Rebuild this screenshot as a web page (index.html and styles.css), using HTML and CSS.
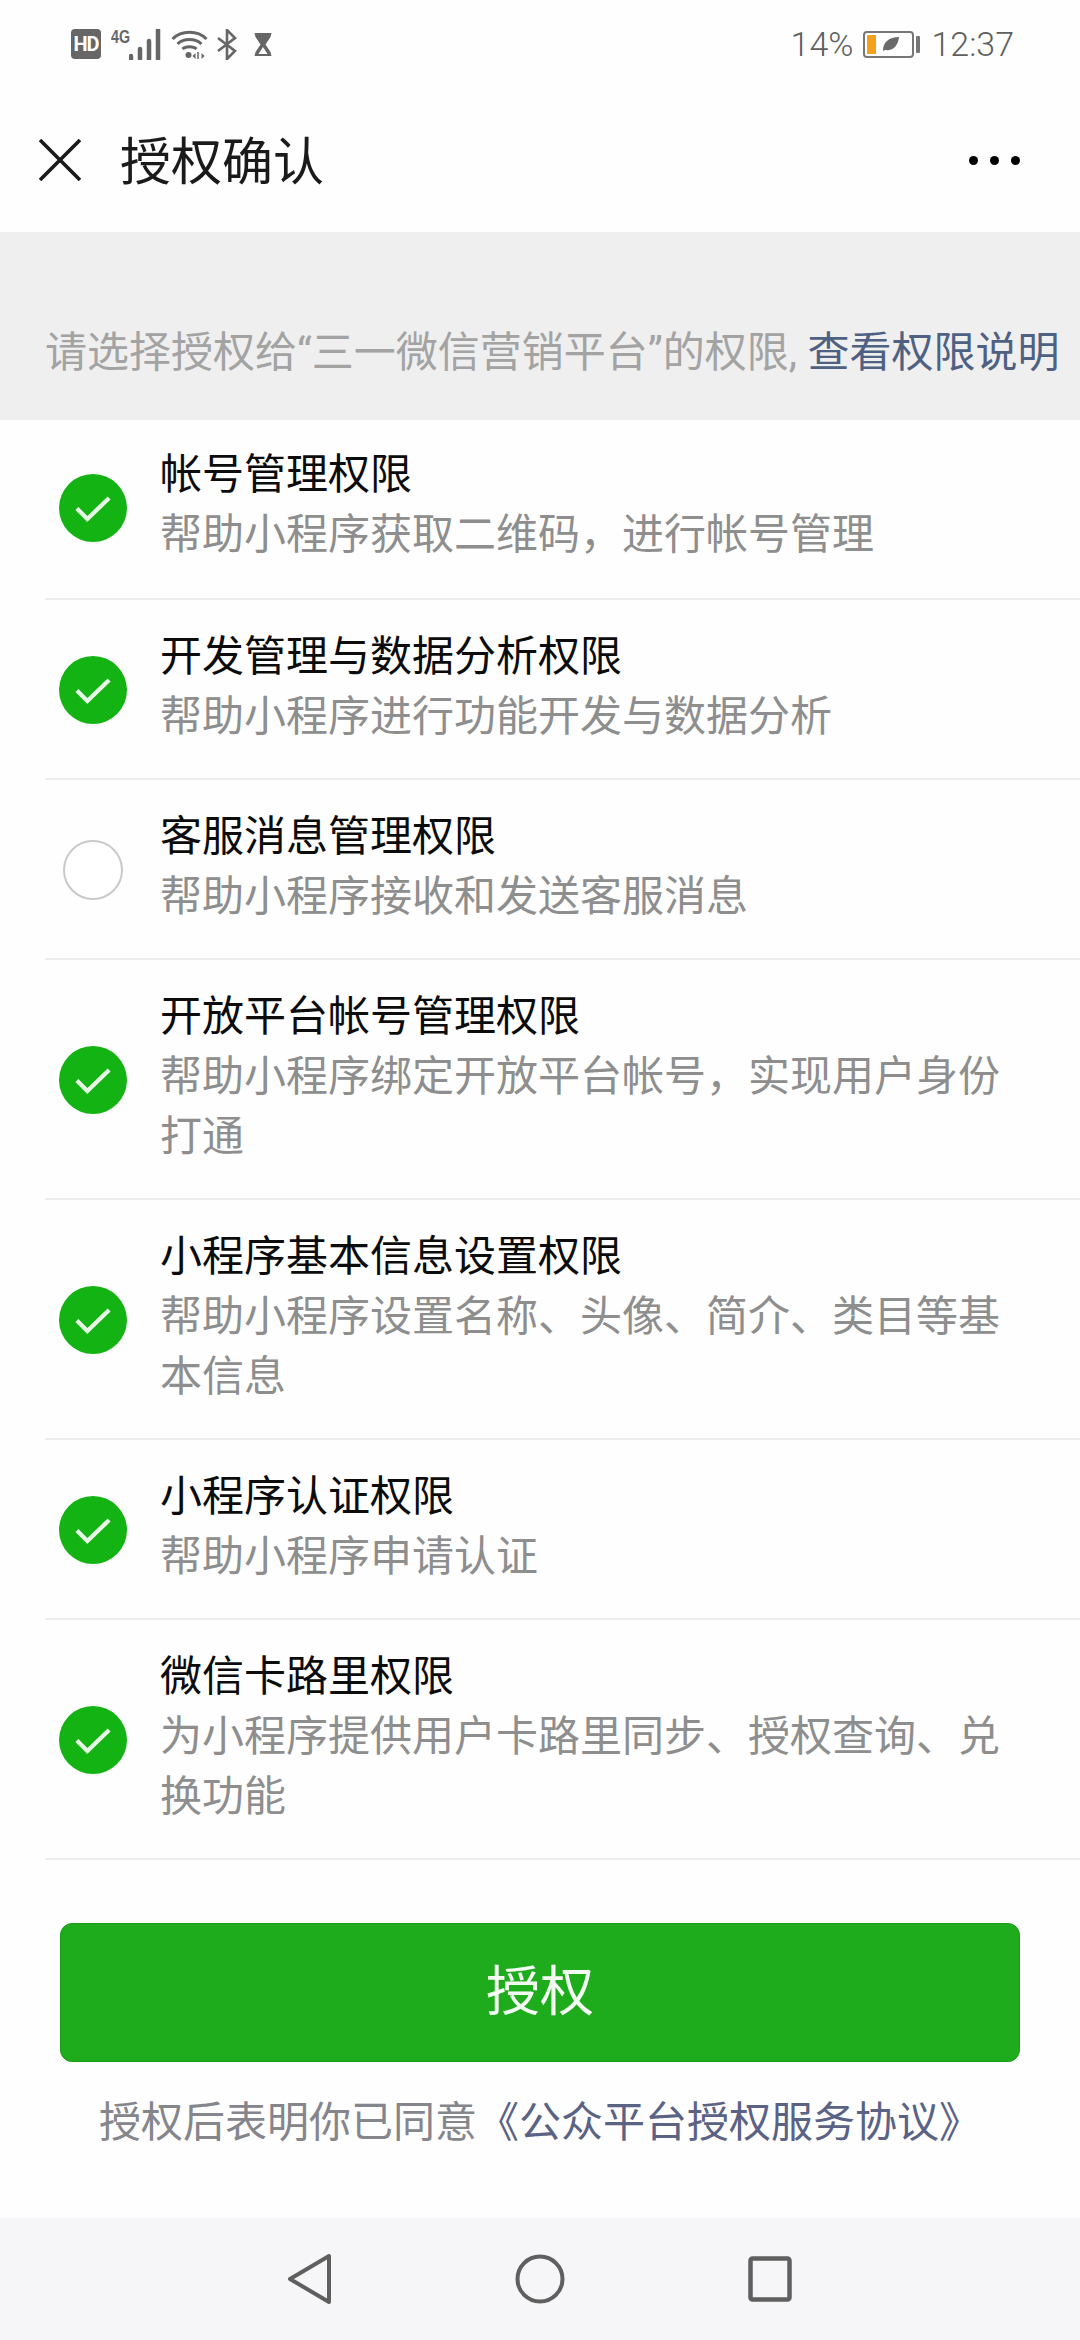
FILE: index.html
```html
<!DOCTYPE html>
<html lang="zh-CN">
<head>
<meta charset="utf-8">
<title>授权确认</title>
<link rel="stylesheet" href="styles.css">
</head>
<body>
<div class="page">
  <header class="status">
    <div class="status-left">
      <span class="hd">HD</span>
      <span class="net">
        <span class="net-label">4G</span>
        <svg class="bars" width="32" height="31" viewBox="0 0 32 31"><path d="M2 27v3M11 20v10M20 12v18M29 1v29" stroke="#666" stroke-width="4.500" stroke-linecap="round" fill="none"/></svg>
      </span>
      <svg class="wifi" width="37" height="30" viewBox="0 0 36 30"><g fill="none" stroke="#666" stroke-width="3"><path d="M1 10C10 1 26 1 35 10"/><path d="M6 15C12 9 24 9 30 15"/><path d="M11 20C14 17 22 17 25 20"/></g><circle cx="17" cy="26" r="3" fill="#666"/><path d="M24 24l-3 3 3 3zM30 24l3 3-3 3z" fill="#666"/><path d="M26.500 23v7" stroke="#666" stroke-width="1.500"/></svg>
      <svg class="bt" width="20" height="31" viewBox="0 0 20 31"><path d="M1 9l17 13-8 8V1l8 8L1 22" fill="none" stroke="#666" stroke-width="2.600"/></svg>
      <svg class="glass" width="18" height="23" viewBox="0 0 17 23"><path d="M0 0h17l-1 4-5 7.500 5 7.500 1 4H0l1-4 5-7.500-5-7.500z" fill="#666"/><path d="M8.500 14L4 21h9z" fill="#fff"/></svg>
    </div>
    <div class="status-right">
      <span class="pct">14%</span>
      <span class="batt">
        <span class="batt-body">
          <span class="batt-fill"></span>
          <svg class="leaf" width="17" height="16" viewBox="0 0 17 16"><path d="M1 15C1 6 7 1 17 1 16 10 11 15 3 14z" fill="#6a6a6a"/></svg>
        </span>
        <span class="batt-nub"></span>
      </span>
      <span class="time">12:37</span>
    </div>
  </header>

  <nav class="appbar">
    <svg class="close" width="42" height="42" viewBox="0 0 42 42"><path d="M1 1l40 40M41 1L1 41" stroke="#1a1a1a" stroke-width="3.600" fill="none"/></svg>
    <h1 class="title">授权确认</h1>
    <div class="dots"><span></span><span></span><span></span></div>
  </nav>

  <section class="notice">
    <p class="notice-text">请选择授权给“三一微信营销平台”的权限, <span class="link">查看权限说明</span></p>
  </section>

  <main class="list">
    <div class="row">
      <span class="check on"><svg width="38" height="28" viewBox="0 0 38 28"><path d="M2 14l11 11L36 3" fill="none" stroke="#e8f8e6" stroke-width="4.500"/></svg></span>
      <div class="text"><div class="name">帐号管理权限</div><div class="desc">帮助小程序获取二维码，进行帐号管理</div></div>
    </div>
    <div class="row">
      <span class="check on"><svg width="38" height="28" viewBox="0 0 38 28"><path d="M2 14l11 11L36 3" fill="none" stroke="#e8f8e6" stroke-width="4.500"/></svg></span>
      <div class="text"><div class="name">开发管理与数据分析权限</div><div class="desc">帮助小程序进行功能开发与数据分析</div></div>
    </div>
    <div class="row">
      <span class="check off"></span>
      <div class="text"><div class="name">客服消息管理权限</div><div class="desc">帮助小程序接收和发送客服消息</div></div>
    </div>
    <div class="row">
      <span class="check on"><svg width="38" height="28" viewBox="0 0 38 28"><path d="M2 14l11 11L36 3" fill="none" stroke="#e8f8e6" stroke-width="4.500"/></svg></span>
      <div class="text"><div class="name">开放平台帐号管理权限</div><div class="desc">帮助小程序绑定开放平台帐号，实现用户身份打通</div></div>
    </div>
    <div class="row">
      <span class="check on"><svg width="38" height="28" viewBox="0 0 38 28"><path d="M2 14l11 11L36 3" fill="none" stroke="#e8f8e6" stroke-width="4.500"/></svg></span>
      <div class="text"><div class="name">小程序基本信息设置权限</div><div class="desc">帮助小程序设置名称、头像、简介、类目等基本信息</div></div>
    </div>
    <div class="row">
      <span class="check on"><svg width="38" height="28" viewBox="0 0 38 28"><path d="M2 14l11 11L36 3" fill="none" stroke="#e8f8e6" stroke-width="4.500"/></svg></span>
      <div class="text"><div class="name">小程序认证权限</div><div class="desc">帮助小程序申请认证</div></div>
    </div>
    <div class="row">
      <span class="check on"><svg width="38" height="28" viewBox="0 0 38 28"><path d="M2 14l11 11L36 3" fill="none" stroke="#e8f8e6" stroke-width="4.500"/></svg></span>
      <div class="text"><div class="name">微信卡路里权限</div><div class="desc">为小程序提供用户卡路里同步、授权查询、兑换功能</div></div>
    </div>
  </main>

  <footer class="actions">
    <button class="grant" type="button">授权</button>
    <p class="agree">授权后表明你已同意<span class="link-dark">《公众平台授权服务协议》</span></p>
  </footer>

  <div class="sysnav">
    <svg width="46" height="52" viewBox="0 0 46 52"><path d="M42 3v46L3 26z" fill="none" stroke="#5f5f5f" stroke-width="4" stroke-linejoin="round"/></svg>
    <svg width="50" height="50" viewBox="0 0 50 50"><circle cx="25" cy="25" r="22.500" fill="none" stroke="#5f5f5f" stroke-width="4"/></svg>
    <svg width="44" height="46" viewBox="0 0 44 46"><rect x="2.500" y="2.500" width="39" height="41" rx="2" fill="none" stroke="#5f5f5f" stroke-width="4.500"/></svg>
  </div>
</div>
</body>
</html>
```
FILE: styles.css
```css
* { box-sizing: border-box; }
html, body { margin: 0; padding: 0; }
body {
  background: #fff;
  font-family: Roboto, "Noto Sans CJK SC", sans-serif;
}
.page {
  width: 1080px;
  height: 2340px;
  display: flex;
  flex-direction: column;
  overflow: hidden;
  background: #fefefe;
}

/* status bar */
.status {
  height: 90px;
  padding: 29px 66px 0 71px;
  display: flex;
  justify-content: space-between;
  align-items: flex-start;
  color: #666;
}
.status-left { display: flex; align-items: flex-start; }
.hd {
  width: 30px;
  height: 30px;
  border-radius: 4px;
  background: #666;
  color: #fff;
  font-size: 20px;
  font-weight: 700;
  line-height: 30px;
  text-align: center;
  letter-spacing: -1px;
}
.net { display: flex; margin-left: 10px; }
.net-label {
  font-family: "Liberation Sans", sans-serif;
  font-size: 19px;
  font-weight: 700;
  line-height: 15px;
  transform: scaleX(.75);
  transform-origin: left top;
  width: 18px;
}
.wifi { margin-left: 10px; }
.bt { margin-left: 9px; }
.glass { margin-left: 17px; margin-top: 4px; }
.status-right {
  display: flex;
  align-items: center;
  height: 30px;
  font-size: 34px;
  line-height: 30px;
  font-weight: 300;
  color: #5f5f5f;
}
.batt { display: flex; align-items: center; margin-left: 10px; }
.batt-body {
  width: 51px;
  height: 27px;
  border: 2px solid #777;
  border-radius: 4px;
  padding: 2px;
  display: flex;
  align-items: center;
  background: #fff;
}
.batt-fill { width: 9px; height: 100%; background: #f5a11c; }
.leaf { margin-left: 6px; }
.batt-nub { width: 4px; height: 17px; margin-left: 2px; background: #777; border-radius: 1px; }
.time { margin-left: 11px; }

/* app bar */
.appbar {
  height: 142px;
  padding: 0 0 0 39px;
  display: flex;
  align-items: flex-start;
}
.close { margin-top: 49px; }
.title {
  margin: 40px 0 0 39px;
  font-size: 51px;
  font-weight: 400;
  line-height: 66px;
  color: #1a1a1a;
}
.dots {
  margin-left: auto;
  margin-right: 60px;
  margin-top: 66px;
  display: flex;
  gap: 12px;
}
.dots span { width: 9px; height: 9px; border-radius: 50%; background: #000; }

/* notice band */
.notice {
  height: 188px;
  background: #efefef;
  padding: 91px 0 0 45px;
}
.notice-text {
  margin: 0;
  font-size: 42px;
  line-height: 60px;
  color: #a3a3a3;
  white-space: nowrap;
}
.link { color: #4f6183; }

/* list */
.list { display: flex; flex-direction: column; flex: none; }
.row {
  margin-left: 45px;
  display: flex;
  align-items: center;
  padding: 27px 60px 31px 0;
  border-bottom: 2px solid #eeeeee;
}
.row:first-child { padding: 25px 60px 33px 0; }
.check {
  flex: none;
  width: 68px;
  height: 68px;
  margin: 6px 33px 0 14px;
  border-radius: 50%;
  display: flex;
  align-items: center;
  justify-content: center;
}
.check.on { background: #12b312; }
.check.on svg { width: 36px; height: 27px; }
.check.off {
  width: 60px;
  height: 60px;
  margin: 6px 37px 0 18px;
  border: 2px solid #c9c9c9;
  background: #fff;
}
.text { flex: 1; min-width: 0; }
.name { font-size: 42px; line-height: 60px; color: #0c0c0c; }
.desc { font-size: 42px; line-height: 60px; color: #8e8e8e; }

/* footer */
.actions {
  flex: 1;
  padding: 63px 60px 0;
  display: flex;
  flex-direction: column;
  align-items: center;
}
.grant {
  width: 960px;
  height: 139px;
  border: 1px solid #199a18;
  border-radius: 12px;
  background: #1fac1c;
  color: #f3fbf2;
  font-family: inherit;
  font-size: 54px;
  line-height: 60px;
}
.agree {
  margin: 31px 0 0;
  font-size: 42px;
  line-height: 60px;
  color: #85858c;
  white-space: nowrap;
}
.link-dark { color: #5a6285; }

/* system nav */
.sysnav {
  height: 122px;
  flex: none;
  background: #f6f6f8;
  display: flex;
  align-items: center;
  justify-content: center;
}
.sysnav svg:nth-child(1) { margin-right: 182px; margin-left: -2px; }
.sysnav svg:nth-child(3) { margin-left: 183px; }
```
